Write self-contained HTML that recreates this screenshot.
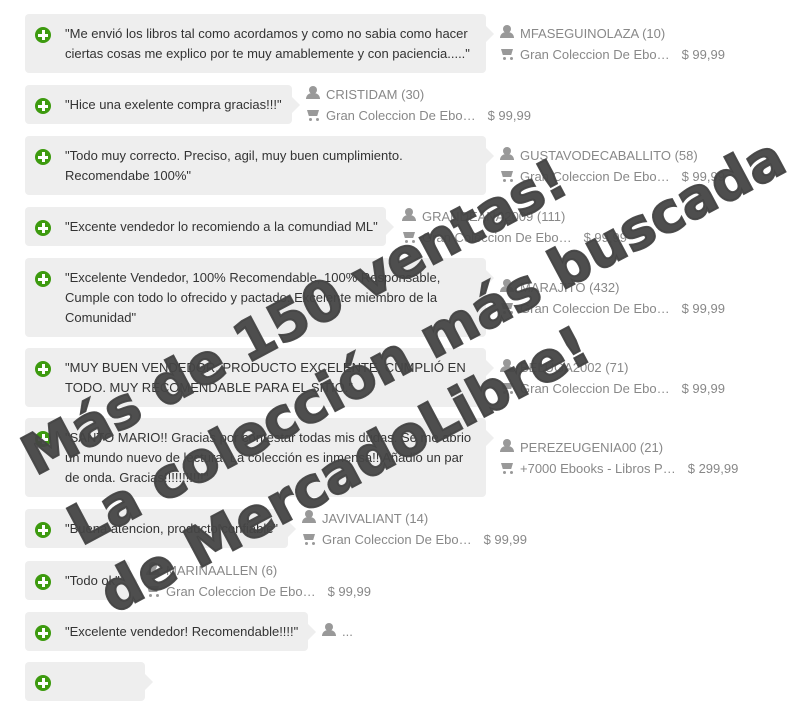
<!DOCTYPE html>
<html><head><meta charset="utf-8"><style>
body{margin:0;width:811px;height:684px;overflow:hidden;background:#fff;font-family:"Liberation Sans",Arial,sans-serif;position:relative}
.b{position:absolute;left:25px;background:#eee;border-radius:4px;color:#333;font-size:13px;line-height:20px;padding:10px 8px 10px 40px;box-sizing:border-box}
.n{white-space:nowrap}
.b:after{content:"";position:absolute;right:-8px;top:12px;border-left:8px solid #eee;border-top:8px solid transparent;border-bottom:8px solid transparent}
.b i{position:absolute;left:10px;top:13px;width:16px;height:16px;border-radius:50%;background:#3d9a0f}
.b i:before{content:"";position:absolute;left:3px;top:6.5px;width:10px;height:3px;background:#fff}
.b i:after{content:"";position:absolute;left:6.5px;top:3px;width:3px;height:10px;background:#fff}
.s{position:absolute;color:#888;font-size:13px;line-height:21px}
.s div{white-space:nowrap;position:relative;padding-left:20px}
.u:before{content:"";position:absolute;left:3px;top:2px;width:8px;height:8px;border-radius:50%;background:#999}
.u:after{content:"";position:absolute;left:0px;top:9px;width:14px;height:6px;border-radius:6px 6px 0 0;background:#999}
.c:before{content:"";position:absolute;left:1px;top:5px;width:12px;height:6px;background:#999;clip-path:polygon(0 0,100% 0,85% 100%,15% 100%)}
.c:after{content:"";position:absolute;left:3px;top:13px;width:3px;height:3px;border-radius:50%;background:#999;box-shadow:7px 0 #999}
.c span{margin-left:12px}
.w{position:absolute;font-family:"DejaVu Sans",sans-serif;font-weight:bold;font-size:55px;color:rgba(68,68,68,.95);-webkit-text-stroke:2px rgba(68,68,68,.95);white-space:nowrap;transform-origin:0 100%;transform:rotate(-28deg);line-height:57px}
</style></head><body>

<div class="b" style="top:14px;width:461px;height:59px"><i></i>"Me envió los libros tal como acordamos y como no sabia como hacer ciertas cosas me explico por te muy amablemente y con paciencia....."</div>
<div class="s" style="left:500px;top:23px"><div class="u">MFASEGUINOLAZA (10)</div><div class="c">Gran Coleccion De Ebo…<span>$ 99,99</span></div></div>

<div class="b n" style="top:85px;width:267px;height:39px"><i></i>"Hice una exelente compra gracias!!!"</div>
<div class="s" style="left:306px;top:84px"><div class="u">CRISTIDAM (30)</div><div class="c">Gran Coleccion De Ebo…<span>$ 99,99</span></div></div>

<div class="b" style="top:136px;width:461px;height:59px"><i></i>"Todo muy correcto. Preciso, agil, muy buen cumplimiento. Recomendabe 100%"</div>
<div class="s" style="left:500px;top:145px"><div class="u">GUSTAVODECABALLITO (58)</div><div class="c">Gran Coleccion De Ebo…<span>$ 99,99</span></div></div>

<div class="b n" style="top:207px;width:361px;height:39px"><i></i>"Excente vendedor lo recomiendo a la comundiad ML"</div>
<div class="s" style="left:402px;top:206px"><div class="u">GRANDEANA2009 (111)</div><div class="c">Gran Coleccion De Ebo…<span>$ 99,99</span></div></div>

<div class="b" style="top:258px;width:461px;height:79px"><i></i>"Excelente Vendedor, 100% Recomendable, 100% Responsable, Cumple con todo lo ofrecido y pactado. Excelente miembro de la Comunidad"</div>
<div class="s" style="left:500px;top:277px"><div class="u">MARAJITO (432)</div><div class="c">Gran Coleccion De Ebo…<span>$ 99,99</span></div></div>

<div class="b" style="top:348px;width:461px;height:59px"><i></i>"MUY BUEN VENDEDOR, PRODUCTO EXCELENTE. CUMPLIÓ EN TODO. MUY RECOMENDABLE PARA EL SITIO."</div>
<div class="s" style="left:500px;top:357px"><div class="u">BELUGA2002 (71)</div><div class="c">Gran Coleccion De Ebo…<span>$ 99,99</span></div></div>

<div class="b" style="top:418px;width:461px;height:79px"><i></i>"SANTO MARIO!! Gracias por contestar todas mis dudas. Se me abrio un mundo nuevo de lectura. La colección es inmensa!! Añadio un par de onda. Gracias!!!!!!!!!!!"</div>
<div class="s" style="left:500px;top:437px"><div class="u">PEREZEUGENIA00 (21)</div><div class="c">+7000 Ebooks - Libros P…<span>$ 299,99</span></div></div>

<div class="b n" style="top:509px;width:263px;height:39px"><i></i>"Buena atencion, producto confiable"</div>
<div class="s" style="left:302px;top:508px"><div class="u">JAVIVALIANT (14)</div><div class="c">Gran Coleccion De Ebo…<span>$ 99,99</span></div></div>

<div class="b n" style="top:561px;width:105px;height:39px"><i></i>"Todo ok"</div>
<div class="s" style="left:146px;top:560px"><div class="u">MARINAALLEN (6)</div><div class="c">Gran Coleccion De Ebo…<span>$ 99,99</span></div></div>

<div class="b n" style="top:612px;width:283px;height:39px"><i></i>"Excelente vendedor! Recomendable!!!!"</div>
<div class="s" style="left:322px;top:621px"><div class="u">...</div></div>

<div class="b" style="top:662px;width:120px;height:39px"><i></i></div>

<div class="w" style="left:40px;top:428px">Más de 150 ventas!</div>
<div class="w" style="left:86px;top:498px">La colección más buscada</div>
<div class="w" style="left:118px;top:566px">de MercadoLibre!</div>
</body></html>
